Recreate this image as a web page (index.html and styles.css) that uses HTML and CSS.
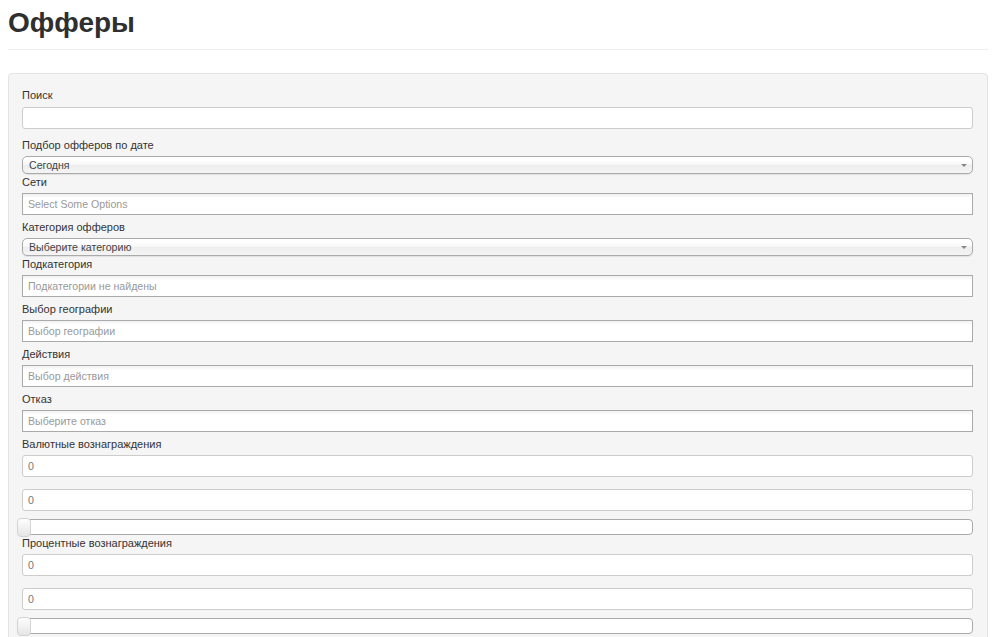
FILE: index.html
```html
<!DOCTYPE html>
<html lang="ru">
<head>
<meta charset="utf-8">
<title>Офферы</title>
<link rel="stylesheet" href="styles.css">
</head>
<body>
<div class="page">
  <h1 class="title">Офферы</h1>
  <div class="divider"></div>
  <form class="well">
    <div class="group group-search">
      <label class="lbl">Поиск</label>
      <input class="inp" type="text">
    </div>
    <div class="group group-select">
      <label class="lbl">Подбор офферов по дате</label>
      <div class="chosen-single"><span>Сегодня</span><i class="arrow"></i></div>
    </div>
    <div class="group">
      <label class="lbl">Сети</label>
      <input class="inp chosen-multi" type="text" placeholder="Select Some Options">
    </div>
    <div class="group group-select">
      <label class="lbl">Категория офферов</label>
      <div class="chosen-single"><span>Выберите категорию</span><i class="arrow"></i></div>
    </div>
    <div class="group">
      <label class="lbl">Подкатегория</label>
      <input class="inp chosen-multi" type="text" placeholder="Подкатегории не найдены">
    </div>
    <div class="group">
      <label class="lbl">Выбор географии</label>
      <input class="inp chosen-multi" type="text" placeholder="Выбор географии">
    </div>
    <div class="group">
      <label class="lbl">Действия</label>
      <input class="inp chosen-multi" type="text" placeholder="Выбор действия">
    </div>
    <div class="group">
      <label class="lbl">Отказ</label>
      <input class="inp chosen-multi" type="text" placeholder="Выберите отказ">
    </div>
    <div class="group group-range">
      <label class="lbl">Валютные вознаграждения</label>
      <input class="inp inp-num" type="text" value="0">
      <input class="inp inp-num" type="text" value="0">
      <div class="slider"><span class="handle"></span></div>
    </div>
    <div class="group group-range">
      <label class="lbl">Процентные вознаграждения</label>
      <input class="inp inp-num" type="text" value="0">
      <input class="inp inp-num" type="text" value="0">
      <div class="slider"><span class="handle"></span></div>
    </div>
  </form>
</div>
</body>
</html>
```
FILE: styles.css
```css
* { box-sizing: border-box; }
html, body { margin: 0; padding: 0; background: #fff; }
body {
  font-family: "Liberation Sans", Arial, sans-serif;
  color: #333;
  overflow: hidden;
}
.page { padding: 5px 10px 0 8px; }
.title {
  margin: 0;
  font-size: 28px;
  line-height: 36px;
  font-weight: bold;
  color: #2f2f2f;
}
.divider {
  margin-top: 8px;
  border-top: 1px solid #eeeeee;
  height: 0;
}
.well {
  margin: 23px 0 0 0;
  background: #f5f5f5;
  border: 1px solid #e3e3e3;
  border-radius: 4px;
  padding: 13px 14px 20px 13px;
  display: flex;
  flex-direction: column;
}
.group { display: flex; flex-direction: column; margin-bottom: 4px; }
.group-search { margin-bottom: 8px; }
.group-select { margin-bottom: 0; }
.group-range { margin-bottom: 0; }
.lbl {
  display: block;
  font-size: 11px;
  line-height: 16px;
  color: #333;
  margin-bottom: 3px;
}
.group-search .lbl { margin-bottom: 4px; }
.inp {
  display: block;
  width: 100%;
  height: 22px;
  margin: 0;
  padding: 0 5px;
  font-family: "Liberation Sans", Arial, sans-serif;
  font-size: 10.6px;
  color: #555;
  background: #fff;
  border: 1px solid #cccccc;
  border-radius: 3px;
  outline: none;
}
.inp::placeholder { color: #999; }
.chosen-multi {
  border-color: #aaaaaa;
  border-radius: 0;
  background: linear-gradient(#f1f1f1 0%, #ffffff 20%);
}
.inp-num { color: #777; }
.inp-num + .inp-num { margin-top: 12px; }
.chosen-single {
  position: relative;
  height: 18px;
  border: 1px solid #aaaaaa;
  border-radius: 5px;
  background: linear-gradient(#ffffff 20%, #f6f6f6 50%, #eeeeee 52%, #f4f4f4 100%);
  box-shadow: 0 1px 1px rgba(0,0,0,0.08);
  font-size: 10.6px;
  line-height: 16px;
  color: #444;
  padding-left: 6px;
}
.arrow {
  position: absolute;
  right: 5px;
  top: 7px;
  width: 0;
  height: 0;
  border-left: 3px solid transparent;
  border-right: 3px solid transparent;
  border-top: 3px solid #888;
}
.slider {
  position: relative;
  margin-top: 8px;
  height: 16px;
  border: 1px solid #aaaaaa;
  border-radius: 4px;
  background: #fff;
}
.handle {
  position: absolute;
  left: -6px;
  top: -2px;
  width: 14px;
  height: 19px;
  border: 1px solid #d3d3d3;
  border-radius: 4px;
  background: linear-gradient(#fdfdfd, #e6e6e6);
}
```
